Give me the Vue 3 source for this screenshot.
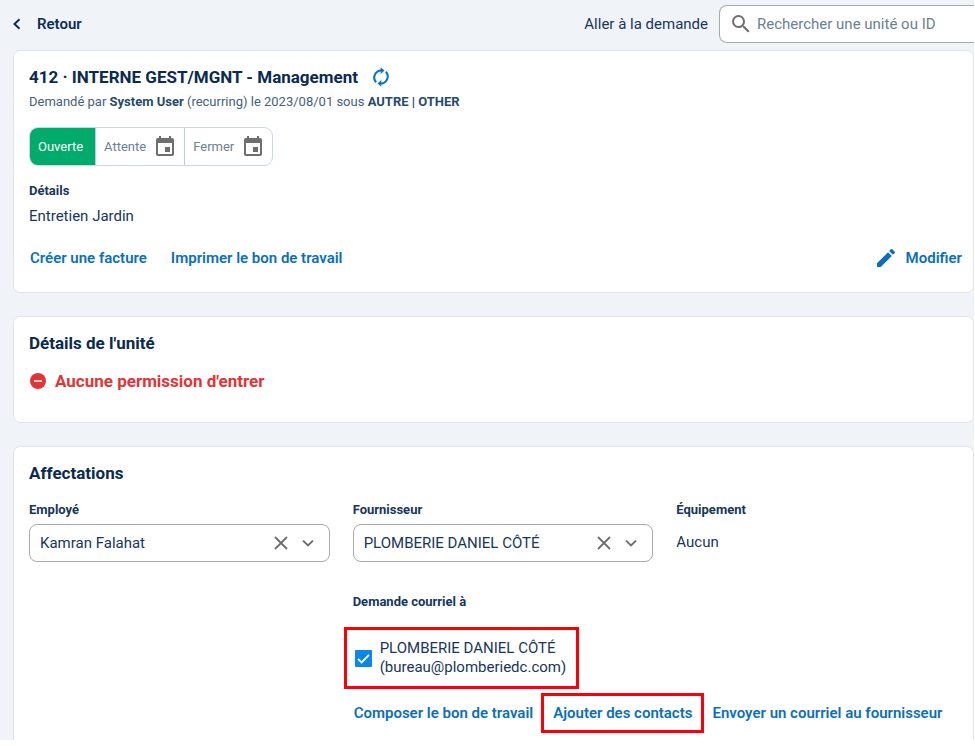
<script setup>
import { ref } from 'vue'

const search = ref('')
const employee = ref('Kamran Falahat')
const supplier = ref('PLOMBERIE DANIEL CÔTÉ')
const emailSupplier = ref(true)
const status = ref('Ouverte')
</script>

<template>
  <div class="page">
    <header class="topbar">
      <button type="button" class="back">
        <svg width="16" height="16" viewBox="0 0 16 16" aria-hidden="true">
          <path d="M8.500 3.2 3.500 8l5 4.800" fill="none" stroke="currentColor" stroke-width="2" />
        </svg>
        Retour
      </button>
      <label class="goto" for="search">Aller à la demande</label>
      <div class="search">
        <svg width="24" height="24" viewBox="0 0 24 24" aria-hidden="true">
          <path fill="currentColor" d="M15.5 14h-.79l-.28-.27A6.471 6.471 0 0 0 16 9.500 6.500 6.500 0 1 0 9.500 16c1.610 0 3.090-.59 4.230-1.570l.27.28v.79l5 4.990L20.490 19l-4.990-5zm-6 0C7.010 14 5 11.990 5 9.500S7.010 5 9.500 5 14 7.010 14 9.500 11.990 14 9.500 14z" />
        </svg>
        <input id="search" v-model="search" type="text" placeholder="Rechercher une unité ou ID" />
      </div>
    </header>

    <main>
      <section class="card summary">
        <div class="title-row">
          <h1>412 · INTERNE GEST/MGNT - Management</h1>
          <button type="button" class="icon-btn refresh" aria-label="Actualiser">
            <svg width="20" height="20" viewBox="0 0 20 20" aria-hidden="true">
              <g fill="none" stroke="currentColor" stroke-width="2.1">
                <path d="M5.200 15.300A7 7 0 0 1 10.500 3.500" />
                <path d="M14.800 4.700A7 7 0 0 1 9.500 16.500" />
              </g>
              <path fill="currentColor" d="M9.700.2 13.500 3.600 9.700 7zM10.300 13 6.500 16.400l3.800 3.400z" />
            </svg>
          </button>
        </div>
        <p class="meta">
          Demandé par <b>System User</b> (recurring) le 2023/08/01 sous <b>AUTRE | OTHER</b>
        </p>
        <div class="segments">
          <button
            v-for="s in ['Ouverte', 'Attente', 'Fermer']"
            :key="s"
            type="button"
            :class="{ active: status === s }"
            @click="status = s"
          >
            {{ s }}
            <svg v-if="s !== 'Ouverte'" width="24" height="24" viewBox="0 0 24 24" aria-hidden="true">
              <path fill="currentColor" d="M17 12h-5v5h5v-5zM16 1v2H8V1H6v2H5c-1.110 0-1.990.9-1.990 2L3 19a2 2 0 0 0 2 2h14c1.100 0 2-.9 2-2V5c0-1.100-.9-2-2-2h-1V1h-2zm3 18H5V8h14v11z" />
            </svg>
          </button>
        </div>
        <h3 class="label details">Détails</h3>
        <p class="details-text">Entretien Jardin</p>
        <div class="actions">
          <a href="#">Créer une facture</a>
          <a href="#">Imprimer le bon de travail</a>
          <a href="#" class="edit">
            <svg width="24" height="24" viewBox="0 0 24 24" aria-hidden="true">
              <path fill="currentColor" d="M3 17.250V21h3.750L17.810 9.940l-3.750-3.750L3 17.250zM20.710 7.040a1 1 0 0 0 0-1.410l-2.340-2.340a1 1 0 0 0-1.410 0l-1.830 1.830 3.750 3.750 1.830-1.830z" />
            </svg>
            Modifier
          </a>
        </div>
      </section>

      <section class="card unit">
        <h2>Détails de l'unité</h2>
        <p class="denied">
          <svg width="18" height="18" viewBox="0 0 18 18" aria-hidden="true">
            <circle cx="9" cy="9" r="8" fill="currentColor" />
            <path d="M5 9h8" stroke="#fff" stroke-width="1.500" />
          </svg>
          Aucune permission d'entrer
        </p>
      </section>

      <section class="card assignments">
        <h2>Affectations</h2>
        <div class="grid">
          <div>
            <label class="label" for="employee">Employé</label>
            <div class="select">
              <select id="employee" v-model="employee">
                <option>Kamran Falahat</option>
              </select>
              <button type="button" class="icon-btn clear" aria-label="Effacer" @click="employee = ''">
                <svg width="16" height="16" viewBox="0 0 16 16" aria-hidden="true">
                  <path d="m2 2 12 12M14 2 2 14" fill="none" stroke="currentColor" stroke-width="1.800" />
                </svg>
              </button>
              <svg class="chevron" width="14" height="14" viewBox="0 0 14 14" aria-hidden="true">
                <path d="m2 4.600 5 4.800 5-4.800" fill="none" stroke="currentColor" stroke-width="2" />
              </svg>
            </div>
          </div>
          <div>
            <label class="label" for="supplier">Fournisseur</label>
            <div class="select">
              <select id="supplier" v-model="supplier">
                <option>PLOMBERIE DANIEL CÔTÉ</option>
              </select>
              <button type="button" class="icon-btn clear" aria-label="Effacer" @click="supplier = ''">
                <svg width="16" height="16" viewBox="0 0 16 16" aria-hidden="true">
                  <path d="m2 2 12 12M14 2 2 14" fill="none" stroke="currentColor" stroke-width="1.800" />
                </svg>
              </button>
              <svg class="chevron" width="14" height="14" viewBox="0 0 14 14" aria-hidden="true">
                <path d="m2 4.600 5 4.800 5-4.800" fill="none" stroke="currentColor" stroke-width="2" />
              </svg>
            </div>
          </div>
          <div>
            <h3 class="label">Équipement</h3>
            <p class="none">Aucun</p>
          </div>
          <div class="email">
            <h3 class="label">Demande courriel à</h3>
            <label class="recipient framed">
              <span class="check">
                <input v-model="emailSupplier" type="checkbox" />
                <svg v-if="emailSupplier" width="17" height="17" viewBox="0 0 17 17" aria-hidden="true">
                  <path d="m3 8.800 3.600 3.600L14 4.800" fill="none" stroke="#fff" stroke-width="1.800" />
                </svg>
              </span>
              <span>PLOMBERIE DANIEL CÔTÉ<br />(bureau@plomberiedc.com)</span>
            </label>
            <div class="email-actions">
              <a href="#">Composer le bon de travail</a>
              <a href="#" class="framed">Ajouter des contacts</a>
              <a href="#">Envoyer un courriel au fournisseur</a>
            </div>
          </div>
        </div>
      </section>
    </main>
  </div>
</template>

<style>
body {
  background: #fff;
}
</style>

<style scoped>
.page,
.page * {
  box-sizing: border-box;
}
.page {
  display: flex;
  flex-direction: column;
  margin: 0 1px 6px 0;
  min-height: calc(100vh - 6px);
  padding-left: 13px;
  background: #f0f4f9;
  color: #17365a;
  font-family: Roboto, "Liberation Sans", sans-serif;
  font-size: 15px;
  line-height: 24px;
}
h1,
h2,
h3,
p {
  margin: 0;
}
svg {
  display: block;
  flex: none;
}
button,
input,
select {
  font: inherit;
  color: inherit;
}
button {
  padding: 0;
  border: 0;
  background: none;
  cursor: pointer;
}
a {
  color: #0b6fba;
  font-weight: 600;
  text-decoration: none;
  white-space: nowrap;
}
.topbar {
  display: flex;
  align-items: center;
  padding: 5px 0 7px;
}
.back {
  display: flex;
  align-items: center;
  gap: 10px;
  margin-left: -2px;
  color: #0d2f57;
  font-weight: 600;
}
.goto {
  margin-left: auto;
}
.search {
  display: flex;
  align-items: center;
  gap: 4px;
  width: 255px;
  height: 38px;
  margin-left: 11px;
  padding-left: 9px;
  border: 1px solid #a9a9a9;
  border-right: 0;
  border-radius: 8px 0 0 8px;
  background: #fff;
  color: #6e6e6e;
}
.search input {
  flex: 1;
  min-width: 0;
  padding: 0;
  border: 0;
  outline: 0;
  background: none;
}
.search input::placeholder {
  color: #6b8093;
  opacity: 1;
}
main {
  display: flex;
  flex: 1;
  flex-direction: column;
  gap: 23px;
}
.card {
  padding: 14px 11px 22px 15px;
  border: 1px solid #e1e4e8;
  border-radius: 7px;
  background: #fff;
}
h1,
h2 {
  color: #0a2a50;
  font-size: 17px;
  font-weight: 700;
  line-height: 24px;
}
.title-row {
  display: flex;
  align-items: center;
  gap: 13px;
}
.icon-btn {
  display: flex;
}
.refresh {
  color: #0b74c4;
}
.meta {
  margin-top: 3px;
  color: #45607c;
  font-size: 13px;
  line-height: 20px;
}
.meta b {
  color: #27496c;
  font-weight: 700;
}
.segments {
  display: flex;
  width: max-content;
  height: 39px;
  margin-top: 15px;
  border: 1px solid #c9d8e4;
  border-radius: 9px;
  overflow: hidden;
}
.segments button {
  display: flex;
  align-items: center;
  gap: 7px;
  padding: 0 7px 0 8px;
  color: #6b8093;
  font-size: 13px;
}
.segments button + button {
  border-left: 1px solid #bccedb;
}
.segments button.active {
  padding: 0 12px 0 8px;
  background: #00ab6b;
  color: #fff;
}
.segments svg {
  color: #6e6e6e;
}
.label {
  display: block;
  color: #17365a;
  font-size: 13px;
  font-weight: 700;
  line-height: 20px;
}
.details {
  margin-top: 15px;
}
.details-text {
  margin-top: 3px;
}
.actions {
  display: flex;
  gap: 24px;
  margin-top: 18px;
  padding-left: 1px;
}
.edit {
  display: flex;
  gap: 8px;
  margin-left: auto;
}
.unit {
  padding-bottom: 29px;
}
.denied {
  display: flex;
  align-items: center;
  gap: 8px;
  margin-top: 14px;
  color: #e23436;
  font-size: 17px;
  font-weight: 700;
}
.assignments {
  flex: 1;
  padding-bottom: 7px;
  border-bottom: 0;
  border-radius: 7px 7px 0 0;
}
.grid {
  display: grid;
  grid-template-columns: minmax(0, 301fr) minmax(0, 301fr) minmax(0, 286fr);
  column-gap: 23px;
  margin-top: 15px;
}
.select {
  display: grid;
  grid-template-columns: minmax(0, 1fr) auto auto;
  align-items: center;
  column-gap: 12px;
  height: 38px;
  margin-top: 4px;
  padding-right: 14px;
  border: 1px solid #a9a9a9;
  border-radius: 8px;
  color: #6e6e6e;
}
.select select {
  grid-area: 1 / 1 / 2 / 4;
  width: 100%;
  height: 36px;
  padding: 0 0 0 10px;
  border: 0;
  outline: 0;
  appearance: none;
  background: none;
  color: #17365a;
}
.clear {
  grid-area: 1 / 2;
}
.chevron {
  grid-area: 1 / 3;
  pointer-events: none;
}
.none {
  margin-top: 10px;
}
.email {
  grid-column: 2 / 4;
  margin-top: 30px;
}
.framed {
  border: 3px solid #fb0007;
}
.recipient {
  display: flex;
  align-items: center;
  gap: 8px;
  width: max-content;
  height: 62px;
  margin: 15px 0 0 -9px;
  padding: 0 10px 0 8px;
  line-height: 19px;
}
.check {
  display: grid;
}
.check > * {
  grid-area: 1 / 1;
}
.check input {
  width: 17px;
  height: 17px;
  margin: 0;
  appearance: none;
  border-radius: 1px;
  background: #fff;
  box-shadow: inset 0 0 0 1px #a9a9a9;
}
.check input:checked {
  background: #0b88e3;
  box-shadow: none;
}
.check svg {
  pointer-events: none;
}
.email-actions {
  display: flex;
  align-items: center;
  gap: 8px;
  margin-top: 4px;
  padding-left: 1px;
}
.email-actions .framed {
  padding: 5px 9px;
}
</style>
